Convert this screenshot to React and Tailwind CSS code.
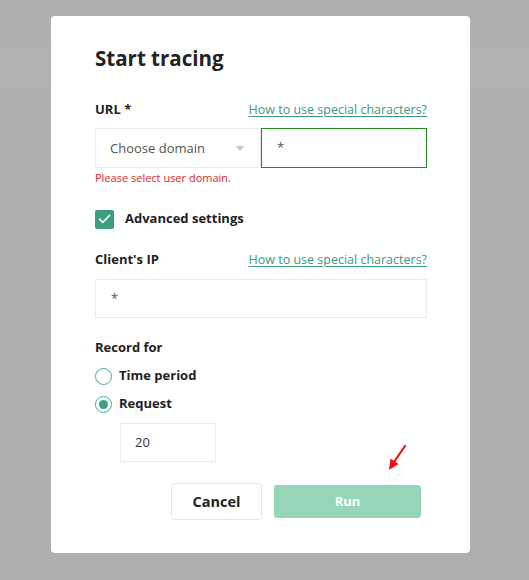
import React from "react";

function LinkText() {
  return (
    <a className="text-[12.5px] text-[#3d9a7d] underline underline-offset-2 decoration-[1px] leading-[20px]">
      How to use special characters?
    </a>
  );
}

export default function App() {
  return (
    <div
      className="w-full h-[580px] pt-[16px] bg-[linear-gradient(to_bottom,#afafaf_47px,#b3b3b3_47px,#b3b3b3_88px,#afafaf_88px)] relative"
      style={{ fontFamily: "'Open Sans', 'Liberation Sans', sans-serif" }}
    >
      <div className="ml-[51px] w-[419px] h-[537px] bg-white rounded-[4px] pt-[28px] pl-[44px] pr-[43px] flex flex-col">
        <h1 className="text-[20.5px] font-bold leading-[28px] text-[#222]">Start tracing</h1>

        <div className="mt-[28px] h-[20px] flex items-center justify-between">
          <span className="text-[13px] font-bold text-[#222]">URL *</span>
          <LinkText />
        </div>

        <div className="mt-[8px] flex h-[40px]">
          <div className="w-[166px] h-full border border-[#ebebeb] flex items-center justify-between pl-[14px] pr-[16px]">
            <span className="text-[13px] text-[#555] translate-y-[1px]">Choose domain</span>
            <span className="w-0 h-0 border-l-[4px] border-r-[4px] border-t-[5px] border-l-transparent border-r-transparent border-t-[#c4c4c4]" />
          </div>
          <div className="flex-1 h-full border border-[#228b22] flex items-center pl-[15px]">
            <span className="text-[13px] text-[#555]">*</span>
          </div>
        </div>
        <div className="mt-[3px] text-[11px] leading-[14px] text-[#e3242b]">Please select user domain.</div>

        <div className="mt-[24px] h-[20px] flex items-center">
          <span className="w-[19px] h-[19px] rounded-[2px] bg-[#3c9d7f] flex items-center justify-center">
            <svg width="13" height="10" viewBox="0 0 13 10" fill="none">
              <path d="M1.5 5.2 L4.8 8.3 L11.5 1.5" stroke="white" strokeWidth="1.7" strokeLinecap="round" strokeLinejoin="round" />
            </svg>
          </span>
          <span className="ml-[11px] text-[13px] font-bold text-[#222]">Advanced settings</span>
        </div>

        <div className="mt-[21px] h-[20px] flex items-center justify-between">
          <span className="text-[13px] font-bold text-[#222]">Client's IP</span>
          <LinkText />
        </div>
        <div className="mt-[9px] h-[39px] border border-[#ebebeb] flex items-center pl-[15px]">
          <span className="text-[13px] text-[#555]">*</span>
        </div>

        <div className="mt-[20px] h-[20px] flex items-center">
          <span className="text-[13px] font-bold text-[#222]">Record for</span>
        </div>
        <div className="mt-[8px] h-[20px] flex items-center">
          <span className="w-[17px] h-[17px] rounded-full border-[1.5px] border-[#4aa88a] bg-white" />
          <span className="ml-[7px] text-[13px] font-bold text-[#222]">Time period</span>
        </div>
        <div className="mt-[8px] h-[20px] flex items-center">
          <span className="w-[17px] h-[17px] rounded-full border-[1.5px] border-[#4aa88a] bg-white flex items-center justify-center">
            <span className="w-[9px] h-[9px] rounded-full bg-[#3c9d7f]" />
          </span>
          <span className="ml-[7px] text-[13px] font-bold text-[#222]">Request</span>
        </div>
        <div className="mt-[9px] ml-[25px] w-[96px] h-[39px] border border-[#ebebeb] flex items-center pl-[14px]">
          <span className="text-[13px] text-[#333]">20</span>
        </div>

        <div className="mt-[21px] flex items-center justify-end pr-[6px] gap-[12px]">
          <button className="w-[91px] h-[37px] border border-[#e6e6e6] rounded-[3px] bg-white text-[14.5px] font-bold text-[#222]">
            Cancel
          </button>
          <button className="w-[147px] h-[33px] rounded-[3px] bg-[#96d6b8] text-[13px] font-bold text-white">
            Run
          </button>
        </div>
      </div>

      <svg className="absolute left-[385px] top-[443px]" width="24" height="30" viewBox="0 0 24 30">
        <line x1="20" y1="3" x2="9" y2="19" stroke="#f01010" strokeWidth="2.2" strokeLinecap="round" />
        <polygon points="4,27 5.5,15.5 13.5,21" fill="#f01010" />
      </svg>
    </div>
  );
}
